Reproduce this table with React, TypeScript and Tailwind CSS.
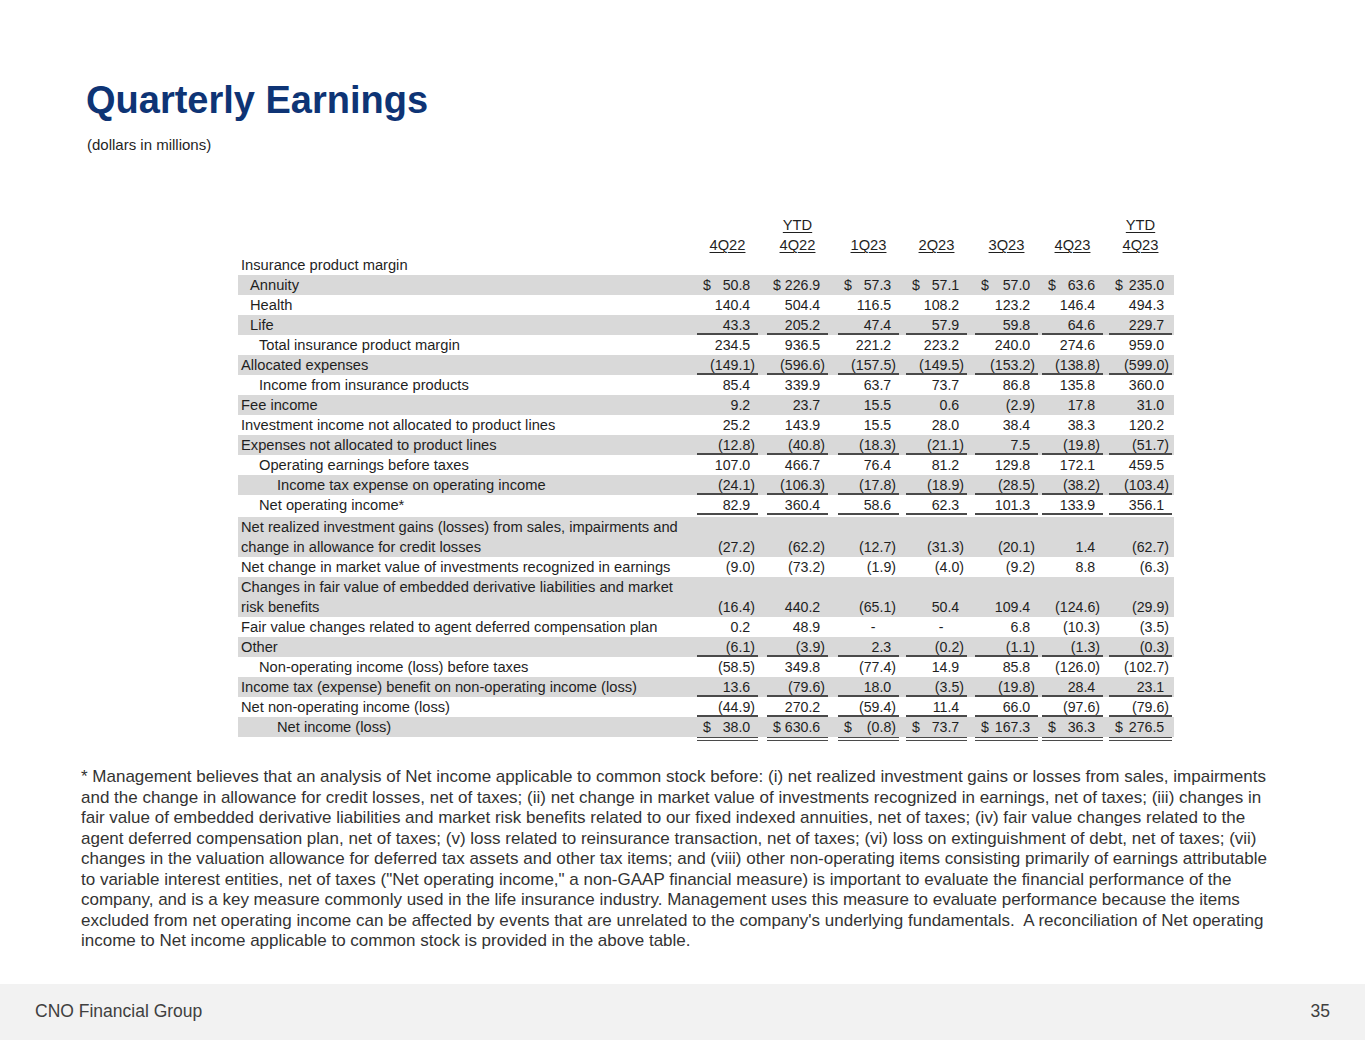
type Row = {
  label: string[];
  lvl: number;
  gray?: boolean;
  vals?: string[];
  dollar?: boolean;
  line?: boolean;
  gapAfter?: boolean;
};

const indent = ['pl-[3px]', 'pl-[12px]', 'pl-[21px]', 'pl-[39px]'];

// column widths / gaps tuned to the underline positions in the source slide
const cols = [
  'w-[61px]',
  'ml-[9px] w-[61px]',
  'ml-[10px] w-[61px]',
  'ml-[7px] w-[61px]',
  'ml-[8px] w-[63px]',
  'ml-[4px] w-[61px]',
  'ml-[6px] w-[63px]',
];

const heads = [['4Q22'], ['YTD', '4Q22'], ['1Q23'], ['2Q23'], ['3Q23'], ['4Q23'], ['YTD', '4Q23']];

const rows: Row[] = [
  { label: ['Insurance product margin'], lvl: 0 },
  { label: ['Annuity'], lvl: 1, gray: true, dollar: true, vals: ['50.8', '226.9', '57.3', '57.1', '57.0', '63.6', '235.0'] },
  { label: ['Health'], lvl: 1, vals: ['140.4', '504.4', '116.5', '108.2', '123.2', '146.4', '494.3'] },
  { label: ['Life'], lvl: 1, gray: true, line: true, vals: ['43.3', '205.2', '47.4', '57.9', '59.8', '64.6', '229.7'] },
  { label: ['Total insurance product margin'], lvl: 2, vals: ['234.5', '936.5', '221.2', '223.2', '240.0', '274.6', '959.0'] },
  { label: ['Allocated expenses'], lvl: 0, gray: true, line: true, vals: ['(149.1)', '(596.6)', '(157.5)', '(149.5)', '(153.2)', '(138.8)', '(599.0)'] },
  { label: ['Income from insurance products'], lvl: 2, vals: ['85.4', '339.9', '63.7', '73.7', '86.8', '135.8', '360.0'] },
  { label: ['Fee income'], lvl: 0, gray: true, vals: ['9.2', '23.7', '15.5', '0.6', '(2.9)', '17.8', '31.0'] },
  { label: ['Investment income not allocated to product lines'], lvl: 0, vals: ['25.2', '143.9', '15.5', '28.0', '38.4', '38.3', '120.2'] },
  { label: ['Expenses not allocated to product lines'], lvl: 0, gray: true, line: true, vals: ['(12.8)', '(40.8)', '(18.3)', '(21.1)', '7.5', '(19.8)', '(51.7)'] },
  { label: ['Operating earnings before taxes'], lvl: 2, vals: ['107.0', '466.7', '76.4', '81.2', '129.8', '172.1', '459.5'] },
  { label: ['Income tax expense on operating income'], lvl: 3, gray: true, line: true, vals: ['(24.1)', '(106.3)', '(17.8)', '(18.9)', '(28.5)', '(38.2)', '(103.4)'] },
  { label: ['Net operating income*'], lvl: 2, line: true, gapAfter: true, vals: ['82.9', '360.4', '58.6', '62.3', '101.3', '133.9', '356.1'] },
  {
    label: ['Net realized investment gains (losses) from sales, impairments and', 'change in allowance for credit losses'],
    lvl: 0,
    gray: true,
    vals: ['(27.2)', '(62.2)', '(12.7)', '(31.3)', '(20.1)', '1.4', '(62.7)'],
  },
  { label: ['Net change in market value of investments recognized in earnings'], lvl: 0, vals: ['(9.0)', '(73.2)', '(1.9)', '(4.0)', '(9.2)', '8.8', '(6.3)'] },
  {
    label: ['Changes in fair value of embedded derivative liabilities and market', 'risk benefits'],
    lvl: 0,
    gray: true,
    vals: ['(16.4)', '440.2', '(65.1)', '50.4', '109.4', '(124.6)', '(29.9)'],
  },
  { label: ['Fair value changes related to agent deferred compensation plan'], lvl: 0, vals: ['0.2', '48.9', '-', '-', '6.8', '(10.3)', '(3.5)'] },
  { label: ['Other'], lvl: 0, gray: true, line: true, vals: ['(6.1)', '(3.9)', '2.3', '(0.2)', '(1.1)', '(1.3)', '(0.3)'] },
  { label: ['Non-operating income (loss) before taxes'], lvl: 2, vals: ['(58.5)', '349.8', '(77.4)', '14.9', '85.8', '(126.0)', '(102.7)'] },
  { label: ['Income tax (expense) benefit on non-operating income (loss)'], lvl: 0, gray: true, line: true, vals: ['13.6', '(79.6)', '18.0', '(3.5)', '(19.8)', '28.4', '23.1'] },
  { label: ['Net non-operating income (loss)'], lvl: 0, line: true, vals: ['(44.9)', '270.2', '(59.4)', '11.4', '66.0', '(97.6)', '(79.6)'] },
  { label: ['Net income (loss)'], lvl: 3, gray: true, dollar: true, vals: ['38.0', '630.6', '(0.8)', '73.7', '167.3', '36.3', '276.5'] },
];

const footnote = [
  '* Management believes that an analysis of Net income applicable to common stock before: (i) net realized investment gains or losses from sales, impairments',
  'and the change in allowance for credit losses, net of taxes; (ii) net change in market value of investments recognized in earnings, net of taxes; (iii) changes in',
  'fair value of embedded derivative liabilities and market risk benefits related to our fixed indexed annuities, net of taxes; (iv) fair value changes related to the',
  'agent deferred compensation plan, net of taxes; (v) loss related to reinsurance transaction, net of taxes; (vi) loss on extinguishment of debt, net of taxes; (vii)',
  'changes in the valuation allowance for deferred tax assets and other tax items; and (viii) other non-operating items consisting primarily of earnings attributable',
  'to variable interest entities, net of taxes ("Net operating income," a non-GAAP financial measure) is important to evaluate the financial performance of the',
  'company, and is a key measure commonly used in the life insurance industry. Management uses this measure to evaluate performance because the items',
  "excluded from net operating income can be affected by events that are unrelated to the company's underlying fundamentals.\u00a0 A reconciliation of Net operating",
  'income to Net income applicable to common stock is provided in the above table.',
];

function Num({ v }: { v: string }) {
  if (v === '-') {
    return (
      <span>
        -<span className="invisible">00)</span>
      </span>
    );
  }
  return (
    <span>
      {v}
      {!v.endsWith(')') && <span className="invisible">)</span>}
    </span>
  );
}

function TableRow({ r }: { r: Row }) {
  const tall = r.label.length > 1;
  return (
    <div
      className={`flex ${tall ? 'h-[40px]' : 'h-[20px]'} ${r.gray ? 'bg-[#d9d9d9]' : ''} ${r.gapAfter ? 'mb-[2px]' : ''}`}
    >
      <div className={`w-[459px] shrink-0 whitespace-nowrap ${indent[r.lvl]}`}>
        {r.label.map((l) => (
          <div key={l}>{l}</div>
        ))}
      </div>
      {r.vals &&
        r.vals.map((v, i) => (
          <div
            key={i}
            className={`${cols[i]} shrink-0 flex items-end pl-[6px] pr-[3px] text-[14.2px] ${r.dollar ? 'justify-between' : 'justify-end'} ${r.line ? 'shadow-[inset_0_-2px_0_#4a4a4a]' : ''}`}
          >
            {r.dollar && <span>$</span>}
            <Num v={v} />
          </div>
        ))}
    </div>
  );
}

export default function App() {
  return (
    <div className="w-[1365px] h-[1055px] bg-white font-['Liberation_Sans',Arial,sans-serif] text-[#1f1f1f] overflow-hidden">
      <div className="pt-[78px] pl-[86px]">
        <h1 className="text-[38px] leading-[44px] font-bold text-[#0e3475]">Quarterly Earnings</h1>
        <p className="mt-[14px] text-[15px] leading-[18px] pl-[1px]">(dollars in millions)</p>
      </div>

      <div className="mt-[61px] ml-[238px] w-[936px] text-[14.7px] leading-[20px]">
        {/* column headings */}
        <div className="flex h-[40px]">
          <div className="w-[459px] shrink-0" />
          {heads.map((h, i) => (
            <div key={i} className={`${cols[i]} shrink-0 flex flex-col justify-end items-center`}>
              {h.map((t) => (
                <span key={t} className="underline decoration-1 underline-offset-[2px]">
                  {t}
                </span>
              ))}
            </div>
          ))}
        </div>

        {rows.map((r) => (
          <TableRow key={r.label[0]} r={r} />
        ))}

        {/* double rule under net income */}
        <div className="flex">
          <div className="w-[459px] shrink-0" />
          {cols.map((c, i) => (
            <div key={i} className={`${c} shrink-0 border-b-4 border-double border-[#4a4a4a]`} />
          ))}
        </div>
      </div>

      <div className="mt-[26px] pl-[81px] text-[17px] leading-[20.5px] text-[#333333]">
        {footnote.map((l) => (
          <div key={l} className="whitespace-nowrap">
            {l}
          </div>
        ))}
      </div>

      <div className="mt-[32px] h-[56px] bg-[#f2f2f2] flex items-center justify-between px-[35px] text-[17.5px] text-[#404040]">
        <span>CNO Financial Group</span>
        <span>35</span>
      </div>
    </div>
  );
}
